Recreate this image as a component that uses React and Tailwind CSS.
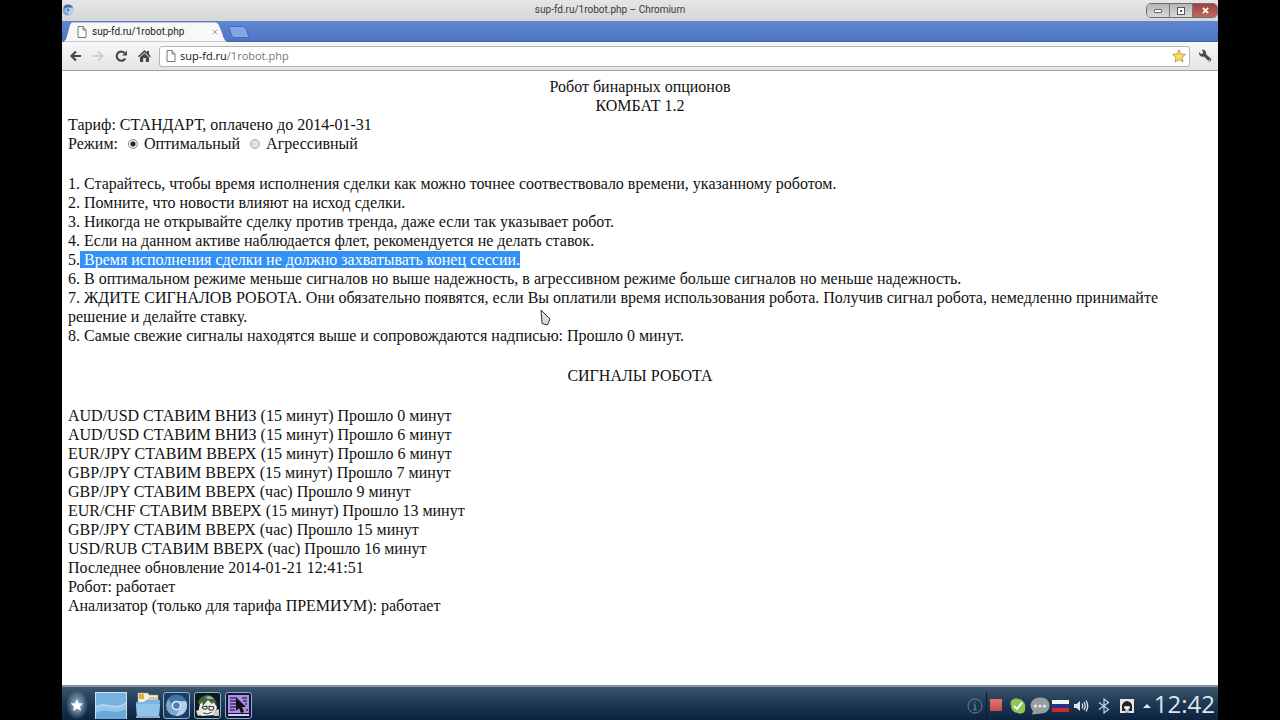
import React, { useState } from 'react'

const RULES = [
  'Старайтесь, чтобы время исполнения сделки как можно точнее соотвествовало времени, указанному роботом.',
  'Помните, что новости влияют на исход сделки.',
  'Никогда не открывайте сделку против тренда, даже если так указывает робот.',
  'Если на данном активе наблюдается флет, рекомендуется не делать ставок.',
  'Время исполнения сделки не должно захватывать конец сессии.',
  'В оптимальном режиме меньше сигналов но выше надежность, в агрессивном режиме больше сигналов но меньше надежность.',
  'ЖДИТЕ СИГНАЛОВ РОБОТА. Они обязательно появятся, если Вы оплатили время использования робота. Получив сигнал робота, немедленно принимайте решение и делайте ставку.',
  'Самые свежие сигналы находятся выше и сопровождаются надписью: Прошло 0 минут.'
]

// index of the rule the user has selected with the mouse
const SELECTED_RULE = 4

const SIGNALS = [
  { pair: 'AUD/USD', side: 'ВНИЗ', term: '15 минут', ago: 0 },
  { pair: 'AUD/USD', side: 'ВНИЗ', term: '15 минут', ago: 6 },
  { pair: 'EUR/JPY', side: 'ВВЕРХ', term: '15 минут', ago: 6 },
  { pair: 'GBP/JPY', side: 'ВВЕРХ', term: '15 минут', ago: 7 },
  { pair: 'GBP/JPY', side: 'ВВЕРХ', term: 'час', ago: 9 },
  { pair: 'EUR/CHF', side: 'ВВЕРХ', term: '15 минут', ago: 13 },
  { pair: 'GBP/JPY', side: 'ВВЕРХ', term: 'час', ago: 15 },
  { pair: 'USD/RUB', side: 'ВВЕРХ', term: 'час', ago: 16 }
]

function ChromiumIcon({ className }) {
  return (
    <svg viewBox="0 0 24 24" className={className} aria-hidden="true">
      <circle cx="12" cy="12" r="11" fill="#7fa6cf" />
      <path d="M12 1a11 11 0 0 1 10 6.500H12a5 5 0 0 0-4.500 3L3 5.500A11 11 0 0 1 12 1z" fill="#4573a8" />
      <path d="M22 7.500A11 11 0 0 1 11 23l5-8.500a5 5 0 0 0-1-7z" fill="#b4cfe9" />
      <circle cx="12" cy="12" r="5" fill="#e9f2fa" />
      <circle cx="12" cy="12" r="3.500" fill="#4a80bd" />
    </svg>
  )
}

function PageIcon() {
  return (
    <svg viewBox="0 0 10 12" className="h-3 w-[10px] shrink-0" fill="#fff" stroke="#777" aria-hidden="true">
      <path d="M1 .5h5L9 4v7.500H1z" />
      <path d="M6 .5V4h3" fill="none" />
    </svg>
  )
}

function TitleBar() {
  return (
    <header className="grid h-[21px] grid-cols-[1fr_auto_1fr] items-start bg-linear-to-b from-[#e6e6e6] to-[#d6d6d6]">
      <ChromiumIcon className="mt-1 size-3" />
      <h1 className="pr-[60px] font-['Roboto',sans-serif] text-[10px] leading-[19px] text-[#3a3a3a]">
        sup-fd.ru/1robot.php – Chromium
      </h1>
      <div className="mt-[3px] flex h-[15px] justify-self-end overflow-hidden rounded-[5px] border border-[#6f6f6f]">
        <button aria-label="Свернуть" className="flex w-[23px] items-center justify-center border-r border-[#777] bg-linear-to-b from-[#b5b5b5] to-[#dadada]">
          <span className="h-[4px] w-[8px] rounded-[1px] border border-[#666] bg-white" />
        </button>
        <button aria-label="Развернуть" className="flex w-[23px] items-center justify-center border-r border-[#777] bg-linear-to-b from-[#b5b5b5] to-[#dadada]">
          <span className="flex size-[8px] items-center justify-center border border-[#555] bg-white">
            <span className="size-[2px] bg-[#555]" />
          </span>
        </button>
        <button aria-label="Закрыть" className="flex w-[24px] items-center justify-center bg-linear-to-b from-[#9c4340] to-[#c06a64]">
          <svg viewBox="0 0 8 8" className="size-[7px]" stroke="#fff" strokeWidth="2">
            <path d="M1 1l6 6M7 1L1 7" />
          </svg>
        </button>
      </div>
    </header>
  )
}

function TabStrip() {
  return (
    <div className="flex h-[21px] bg-linear-to-b from-[#5f87d2] to-[#4b74c4] shadow-[inset_0_-1px_0_#4a62a0]">
      <div className="relative flex w-[166px] items-center gap-[5px] pl-[15px] pr-[7px]">
        <svg viewBox="0 0 166 21" preserveAspectRatio="none" className="absolute inset-0 size-full" aria-hidden="true">
          <path d="M0 21C4 20 4 17 6 10C8 3 8 1 12 1H152C157 1 157 4 160 11C162 17 163 20 166 21z" fill="#f8f8f8" stroke="#41609f" strokeWidth=".6" />
        </svg>
        <span className="relative flex"><PageIcon /></span>
        <span className="relative flex-1 whitespace-nowrap font-['Roboto',sans-serif] text-[10px] leading-4 text-[#222]">sup-fd.ru/1robot.php</span>
        <button aria-label="Закрыть вкладку" className="relative flex size-[12px] items-center justify-center">
          <svg viewBox="0 0 8 8" className="size-[6px]" stroke="#999" strokeWidth="1.300">
            <path d="M1 1l6 6M7 1L1 7" />
          </svg>
        </button>
      </div>
      <button aria-label="Новая вкладка" className="flex items-center">
        <svg viewBox="0 0 22 12" className="h-3 w-[22px]">
          <path d="M1 1.500Q1 .5 2 .5H15Q17 .5 18 3L21 11.500H7Q4 11.500 3.500 9z" fill="#86a5e2" stroke="#4465ab" strokeWidth=".8" />
        </svg>
      </button>
    </div>
  )
}

function Toolbar() {
  return (
    <nav className="flex h-[29px] items-center border-b border-[#a0a0a0] bg-linear-to-b from-[#f8f8f8] to-[#e4e4e4] pl-[7px] pr-[6px]">
      <div className="flex items-center gap-[10px]">
        <button aria-label="Назад">
          <svg viewBox="0 0 13 12" className="h-3 w-[13px]" fill="none" stroke="#484848" strokeWidth="2.200">
            <path d="M7 1.500L2.500 6L7 10.500M2.500 6H12" />
          </svg>
        </button>
        <button aria-label="Вперёд">
          <svg viewBox="0 0 13 12" className="h-3 w-[13px]" fill="none" stroke="#cfcfcf" strokeWidth="2">
            <path d="M6 1.500L10.500 6L6 10.500M10.500 6H1" />
          </svg>
        </button>
        <button aria-label="Обновить">
          <svg viewBox="0 0 13 12" className="h-3 w-[13px]" fill="none" stroke="#484848" strokeWidth="2.200">
            <path d="M10.300 8.500A4.600 4.600 0 1 1 9.500 2.800" />
            <path d="M12 .5V5.500H7z" fill="#484848" stroke="none" />
          </svg>
        </button>
        <button aria-label="Домой">
          <svg viewBox="0 0 13 12" className="h-3 w-[13px]" fill="#484848">
            <path d="M6.500 0L9 2.300V1H11V4.200L13 6.200L12 7.200L6.500 2.200L1 7.200L0 6.200z" />
            <path d="M2 7.200L6.500 3.200L11 7.200V12H7.800V8H5.200V12H2z" />
          </svg>
        </button>
      </div>
      <div className="ml-[8px] flex h-[21px] flex-1 items-center rounded-[3px] border border-[#b5b5b5] bg-white pl-[6px] pr-[3px]">
        <PageIcon />
        <a href="#top" className="flex-1 pl-[4px] text-[11px] leading-4 text-[#777]">
          <span className="text-[#111]">sup-fd.ru</span>/1robot.php
        </a>
        <button aria-label="Добавить в закладки">
          <svg viewBox="0 0 14 14" className="size-[14px]">
            <path d="M7 .8L8.900 5L13.400 5.400L10 8.400L11 13L7 10.600L3 13L4 8.400L.6 5.400L5.100 5z" fill="#f8dc62" stroke="#b9994a" strokeWidth=".9" strokeLinejoin="round" />
          </svg>
        </button>
      </div>
      <button aria-label="Настройки" className="ml-[8px]">
        <svg viewBox="0 0 14 14" className="size-[14px]" fill="#4a4a4a">
          <path d="M1 3.200L3.500 5.300L5.400 3.600L3.800 1C6.500 .3 8.600 2.300 8 5.200L13 9.800C14 11 12.600 13.300 11 12.600L6 7.600C3.500 8.400 .6 6.500 1 3.200z" />
          <circle cx="11.600" cy="11.200" r=".8" fill="#eee" />
        </svg>
      </button>
    </nav>
  )
}

function ModeRadio({ label, value, mode, onChange }) {
  return (
    <label className="flex items-center gap-[6px]">
      <input
        type="radio"
        name="mode"
        value={value}
        checked={mode === value}
        onChange={() => onChange(value)}
        className="size-[10px] appearance-none rounded-full border border-[#a5a5a5] bg-[#e2e2e2] checked:border-[#8a8a8a] checked:bg-[radial-gradient(circle,#222_0_2px,#ececec_3px)]"
      />
      {label}
    </label>
  )
}

function RobotPage() {
  const [mode, setMode] = useState('optimal')

  return (
    <main className="flex-1 bg-white px-[6px] pt-[6px] font-['Liberation_Serif',serif] text-[16px] leading-[19px] text-[#111]">
      <div className="text-center">
        <h2>Робот бинарных опционов</h2>
        <h2>КОМБАТ 1.2</h2>
      </div>
      <p>Тариф: СТАНДАРТ, оплачено до 2014-01-31</p>
      <form className="flex items-center gap-[10px]">
        <span>Режим:</span>
        <ModeRadio label="Оптимальный" value="optimal" mode={mode} onChange={setMode} />
        <ModeRadio label="Агрессивный" value="aggressive" mode={mode} onChange={setMode} />
      </form>

      <div className="py-[21px]">
        {RULES.map((rule, idx) => (
          <p key={idx}>
            {`${idx + 1}.`}
            <span className={idx === SELECTED_RULE ? 'bg-[#3390f5] text-white' : ''}>{` ${rule}`}</span>
          </p>
        ))}
      </div>

      <h2 className="text-center">СИГНАЛЫ РОБОТА</h2>

      <div className="py-[21px]">
        {SIGNALS.map((s, idx) => (
          <p key={idx}>{`${s.pair} СТАВИМ ${s.side} (${s.term}) Прошло ${s.ago} минут`}</p>
        ))}
        <p>Последнее обновление 2014-01-21 12:41:51</p>
        <p>Робот: работает</p>
        <p>Анализатор (только для тарифа ПРЕМИУМ): работает</p>
      </div>
    </main>
  )
}

function Launchers() {
  return (
    <div className="flex items-center pt-[3px]">
      <button aria-label="Меню" className="mr-[5px]">
        <svg viewBox="0 0 26 30" className="h-[30px] w-[26px]">
          <defs>
            <radialGradient id="glow">
              <stop offset="0" stopColor="#a9c6dc" />
              <stop offset="1" stopColor="#a9c6dc" stopOpacity="0" />
            </radialGradient>
          </defs>
          <ellipse cx="13" cy="15" rx="11" ry="15" fill="url(#glow)" />
          <path d="M13 9L14.800 13.200L19.400 13.600L16 16.500L17 21L13 18.600L9 21L10 16.500L6.600 13.600L11.200 13.200z" fill="#fff" />
        </svg>
      </button>
      <button aria-label="Рабочий стол" className="mr-[8px]">
        <svg viewBox="0 0 32 27" className="h-[27px] w-8">
          <rect x=".5" y=".5" width="31" height="28" fill="#78b3df" stroke="#c7dff0" />
          <path d="M1 14C10 8 20 19 31 10V27H1z" fill="#93c6ea" />
          <path d="M1 21C12 15 18 24 31 17V27H1z" fill="#6aa8d8" />
          <path d="M1 15C11 9 20 20 31 11" fill="none" stroke="#c3e0f4" />
        </svg>
      </button>
      <button aria-label="Файлы" className="mr-[2px]">
        <svg viewBox="0 0 26 28" className="h-7 w-[26px]">
          <path d="M3 2H13L14 4H23V14H3z" fill="#f4f2e4" stroke="#9a9a8a" strokeWidth=".6" />
          <path d="M4 3H9V8H4z" fill="#e3ad3a" />
          <path d="M14 7H22M12 9H22" stroke="#c89a43" />
          <path d="M1 11H9L11 9H25L24 25H2z" fill="#7db4e2" />
          <path d="M1 13H25L24 25H2z" fill="#92c3ea" />
          <path d="M1 26H25" stroke="#b9d8ef" strokeWidth="1.500" />
        </svg>
      </button>
      <div className="flex items-center gap-1">
        <button aria-label="Chromium" className="flex size-[27px] items-center justify-center rounded-[3px] border border-[#7fb2d4] bg-[#1f3c60]">
          <ChromiumIcon className="size-[23px]" />
        </button>
        <button aria-label="Терминал сделок" className="rounded-[3px] border border-[#7fb2d4] bg-[#10181c]">
          <svg viewBox="0 0 25 25" className="size-[25px]">
            <path d="M4 20Q3 9 10 6L18 8L22 14L20 22L6 23z" fill="#eef1ec" />
            <path d="M3 9Q6 2 13 2Q21 3 22 13L19 9L17 11L13 7L8 13L7 9L4 12z" fill="#42653f" />
            <path d="M10 4L15 3L19 6L13 6z" fill="#9cbf94" />
            <path d="M7 14L12 13V16H8zM14 13L19 14L18 17H14z" fill="#fff" stroke="#222" />
            <path d="M8 20Q13 22 17 19" fill="none" stroke="#444" />
            <path d="M1 18L6 16L8 21L3 23z" fill="#dfe4df" />
            <path d="M18 18L24 16V23H19z" fill="#c3cbc3" />
          </svg>
        </button>
        <button aria-label="Запись экрана" className="rounded-[3px] border border-[#7fb2d4] bg-[#16152c]">
          <svg viewBox="0 0 25 25" className="size-[25px]">
            <path d="M2 2H23V20H2z" fill="#a98fdf" />
            <path d="M2 21H23V23H2z" fill="#d6ccf2" />
            <path d="M4 5H10M4 8H10M4 11H10M4 14H10M4 17H9M16 5H21M17 8H21M19 11H21M20 17H22" stroke="#3d2f73" strokeWidth="1.300" />
            <path d="M10 4L20 14H16L18 19L15 20L13 15L10 18z" fill="#111" />
          </svg>
        </button>
      </div>
    </div>
  )
}

function Tray() {
  return (
    <div className="flex items-center">
      <div className="flex items-center pt-1">
        <svg viewBox="0 0 16 16" className="size-4" fill="none" stroke="#6f8294" aria-hidden="true">
          <circle cx="8" cy="8" r="7" />
          <path d="M6.500 7H8V12M6 12H10M8 4V5" strokeWidth="1.200" />
        </svg>
        <span className="mx-[3px] h-7 w-px bg-[#0b1a2a]" />
        <span className="mb-[2px] size-[12px] bg-linear-to-b from-[#e27672] to-[#c94a47]" />
        <svg viewBox="0 0 16 16" className="ml-[8px] size-4" aria-hidden="true">
          <path d="M5 .5Q7 0 8 1A7 7 0 0 1 15 9Q16 15 11 15.500Q9 16 8 15A7 7 0 0 1 1 8Q-1 2 5 .5z" fill="#8fc653" />
          <path d="M4 8L7 11L12 4.500" fill="none" stroke="#fff" strokeWidth="2" />
        </svg>
        <svg viewBox="0 0 20 18" className="ml-[4px] h-[18px] w-5" aria-hidden="true">
          <path d="M10 .5C16 .5 19.500 4 19.500 8.500S16 16.500 11 16.500L2 17.500L3 14C-3 7 3 .5 10 .5z" fill="#9a9da0" />
          <circle cx="5.500" cy="9" r="1.500" fill="#eee" />
          <circle cx="10" cy="9" r="1.500" fill="#eee" />
          <circle cx="14.500" cy="9" r="1.500" fill="#eee" />
        </svg>
        <svg viewBox="0 0 17 12" className="ml-[2px] h-3 w-[17px]" aria-hidden="true">
          <path d="M0 0H17V4H0z" fill="#f5f5f5" />
          <path d="M0 4H17V8H0z" fill="#26318c" />
          <path d="M0 8H17V12H0z" fill="#c92a33" />
        </svg>
        <svg viewBox="0 0 16 14" className="ml-[4px] h-[14px] w-4" fill="none" stroke="#dfe7ee" strokeWidth="1.300" aria-hidden="true">
          <path d="M1 5H3.500L7 2V12L3.500 9H1z" fill="#dfe7ee" stroke="none" />
          <path d="M9 4.500Q10.500 7 9 9.500M11 3Q13.500 7 11 11M13 1.500Q16.500 7 13 12.500" />
        </svg>
        <svg viewBox="0 0 12 16" className="ml-[9px] h-4 w-3" fill="none" stroke="#c8d2dc" strokeWidth="1.200" aria-hidden="true">
          <path d="M1 4.500L10.500 11.500L6 15V1L10.500 4.500L1 11.500" />
        </svg>
        <svg viewBox="0 0 16 16" className="ml-[9px] size-4" aria-hidden="true">
          <path d="M1 1H15V15H1z" fill="#e6e6e6" />
          <path d="M3 13V7L5 4L8 3L11 4L13 7V13H10V9H6V13z" fill="#222" />
          <path d="M5 8H11V11H9V15H7V11H5z" fill="#fff" stroke="#444" strokeWidth=".6" />
        </svg>
        <svg viewBox="0 0 8 4" className="ml-[8px] h-1 w-2" fill="#dfe7ee" aria-hidden="true">
          <path d="M4 0L8 4H0z" />
        </svg>
      </div>
      <time className="ml-[3px] text-[24px] leading-[33px] text-[#dfe5ea]">12:42</time>
    </div>
  )
}

function Cursor() {
  return (
    <svg viewBox="0 0 11 17" className="absolute left-[478px] top-[309px] h-[17px] w-[11px]" aria-hidden="true">
      <path d="M1 1L10 10L7.500 16L2 14.500z" fill="#dcdcdc" stroke="#333" strokeLinejoin="round" />
    </svg>
  )
}

export default function App() {
  return (
    <div className="min-h-screen bg-black px-[62px] font-['Open_Sans',sans-serif]">
      <div id="top" className="relative flex min-h-screen flex-col">
        <TitleBar />
        <TabStrip />
        <Toolbar />
        <RobotPage />
        <footer className="flex items-center justify-between border-t-2 border-[#8a939c] bg-linear-to-b from-[#3d566e] via-[#1d3854] to-[#0c2340] pl-[2px] pr-[3px]">
          <Launchers />
          <Tray />
        </footer>
        <Cursor />
      </div>
    </div>
  )
}
